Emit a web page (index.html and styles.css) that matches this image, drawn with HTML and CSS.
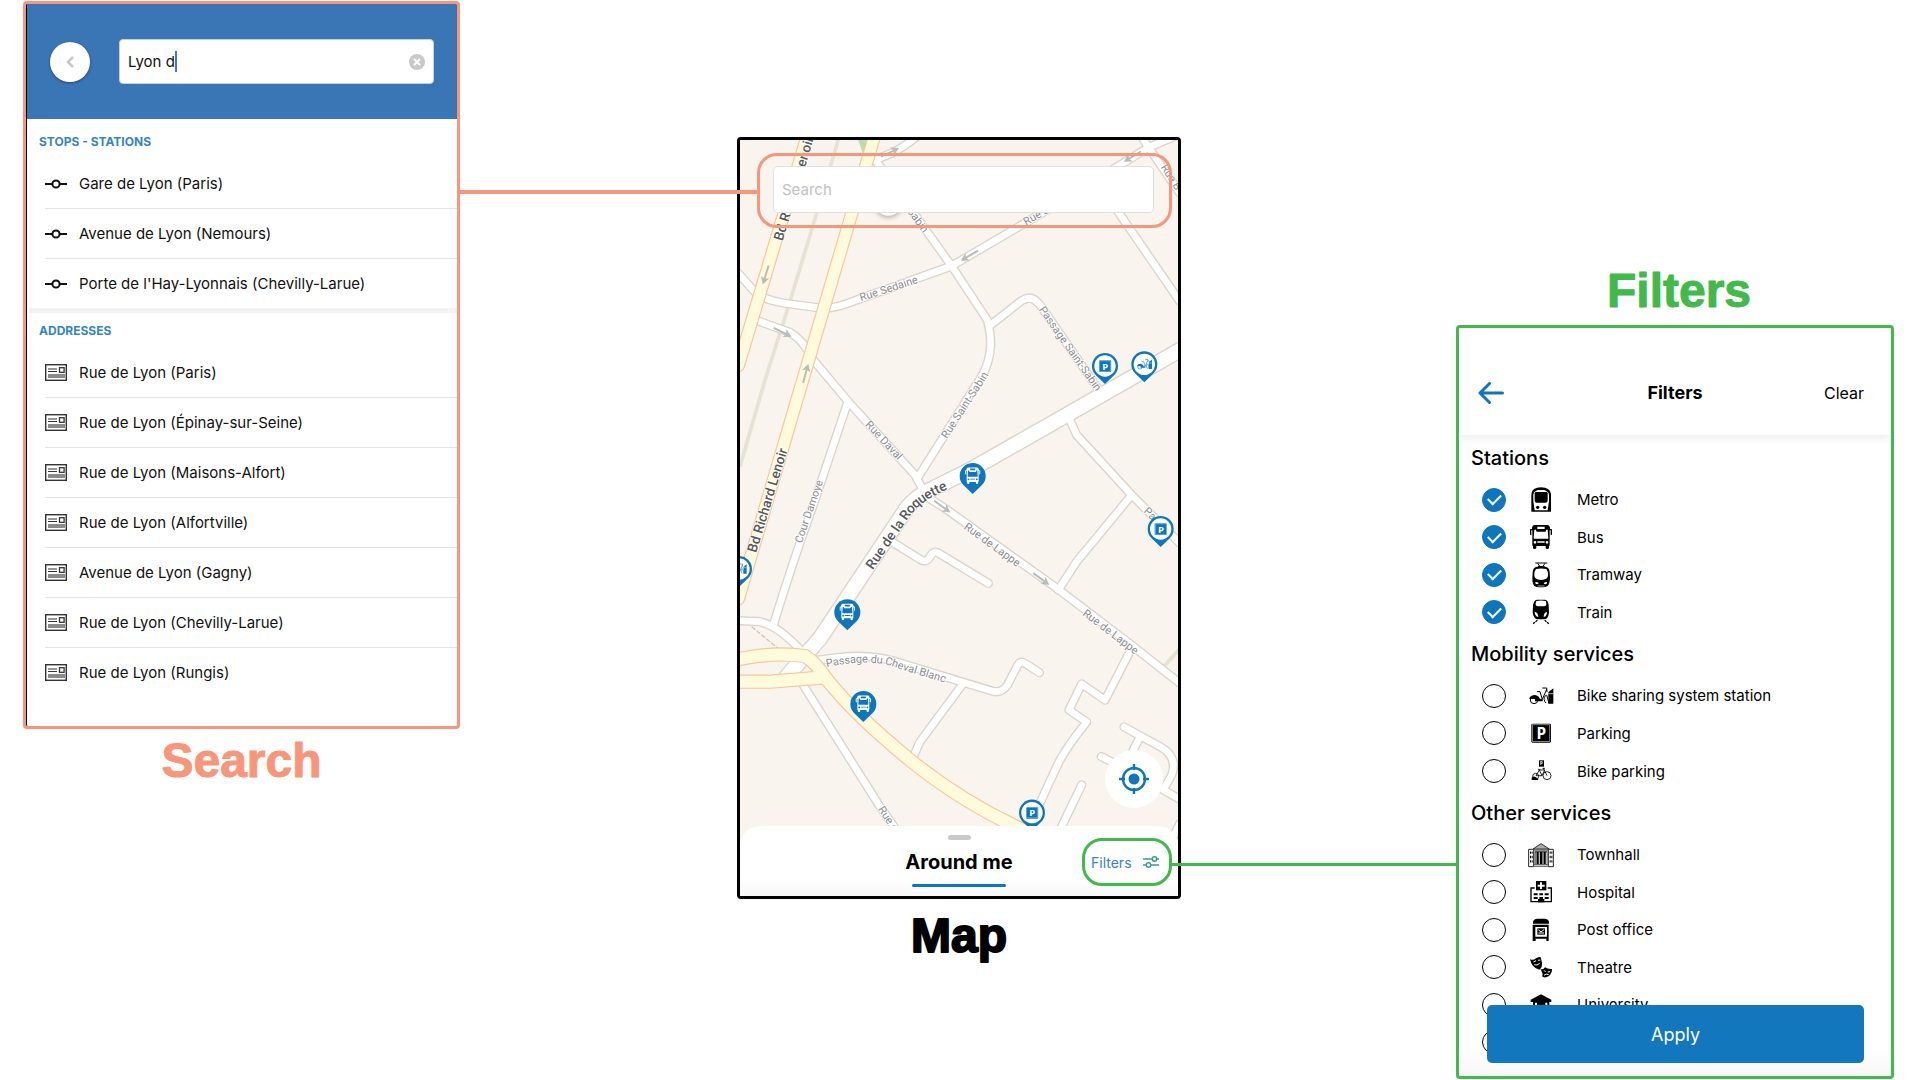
FILE: index.html
```html
<!DOCTYPE html>
<html lang="en">
<head>
<meta charset="utf-8">
<title>Map, search and filters</title>
<link rel="stylesheet" href="styles.css">
</head>
<body>
<svg class="sprite" aria-hidden="true">
  <defs>
    <symbol id="i-stop" viewBox="0 0 22 10"><path d="M0 5h7M15 5h7" stroke="#111" stroke-width="2"/><circle cx="11" cy="5" r="3.6" fill="none" stroke="#111" stroke-width="2"/></symbol>
    <symbol id="i-address" viewBox="0 0 22 17"><rect x=".7" y=".7" width="20.6" height="15.6" fill="#fff" stroke="#333" stroke-width="1.4"/><path d="M3 5h9M3 7.500h9" stroke="#333" stroke-width="1.200"/><path d="M3 11h17M3 13h17" stroke="#666" stroke-width="1.500"/><rect x="14.500" y="3.700" width="4.600" height="4.600" fill="none" stroke="#333" stroke-width="1.300"/></symbol>
    <symbol id="i-metro" viewBox="-42 -42 84 84"><path fill-rule="evenodd" d="M-29 35V-18Q-27-38 0-38T30-18V35ZM-19 31H20L24 4V-16Q22-30 0-30T-23-16V4Z"/><path d="M-15-24H16Q19-24 20-20V2Q19 8 14 8H-13Q-18 8-19 2V-20Q-18-24-15-24Z"/><path d="M-13-27H14" stroke="#fff" stroke-width="3"/><circle cx="-10" cy="22" r="5"/><circle cx="11" cy="22" r="5"/></symbol>
    <symbol id="i-bus" viewBox="-42 -42 84 84"><path fill="currentColor" fill-rule="evenodd" d="M-20-36H20Q26-36 27-28V-24H31Q33-24 33-20V-8Q33-5 29-5V-20H26V26H24V32Q24 36 19 36T14 32V27H-14V32Q-14 36-19 36T-24 32V26H-26V-20H-29V-5Q-33-5-33-8V-20Q-33-24-31-24H-27V-28Q-26-36-20-36ZM-20-22-22 3Q-22 5-20 5H20Q22 5 22 3L20-22H15V-18Q14-16 12-16H-12Q-15-16-15-20V-22ZM-11-31V-24H11V-31ZM-18 12A4 4 0 1 0-18 20 4 4 0 0 0-18 12ZM18 12A4 4 0 1 0 18 20 4 4 0 0 0 18 12ZM-11 13V17H11V13Z"/></symbol>
    <symbol id="i-tram" viewBox="-42 -42 84 84"><path d="M-17-36H19M-10-35-3-25M12-35 5-25M-9-25H11" fill="none" stroke="#000" stroke-width="3"/><path fill-rule="evenodd" d="M-17-23Q0-29 18-23 25-20 26-8L27 10Q26 27 20 33 15 37 0 37T-20 33Q-26 27-26 10L-25-8Q-24-20-17-23ZM-15-18Q-20-12-20 0-21 14 0 15 22 14 21 0 21-12 16-18 0-21-15-18ZM-17 21Q-18 28-12 28-7 27-7 24-11 21-17 21ZM18 21Q19 28 13 28 8 27 8 24 12 21 18 21Z"/><path d="M-10 33H11" stroke="#fff" stroke-width="2"/></symbol>
    <symbol id="i-train" viewBox="-42 -42 84 84"><path fill-rule="evenodd" d="M-12-37H12Q22-35 23-20L24 3Q21 20 12 22H-12Q-21 20-25 3L-24-20Q-22-35-12-37ZM-14-33Q-20-18-10-17H10Q20-18 14-33 0-36-14-33ZM-19-1Q-19 12-8 15-8 2-19-1ZM18-1Q18 12 8 15 8 2 18-1Z"/><path d="M-11 25-25 36M11 25 25 36" stroke="#000" stroke-width="4" stroke-dasharray="7 2"/></symbol>
    <symbol id="i-bikeshare" viewBox="-42 -42 84 84"><g fill="none" stroke="currentColor" stroke-width="3"><circle cx="-21" cy="12" r="11"/><path d="M-14 10H4L17-20M17-3 24 22M4-24H17L18-12M-12-13H-3L4 10M14-2Q4 10 15 21"/></g><path fill="currentColor" d="M-36 8Q-31-3-18-3-7-2-3 10L5 12V16H-18V9ZM22-11 37-23V23H22Z"/><path d="M22-7H37" stroke="#fff" stroke-width="2"/></symbol>
    <symbol id="i-parking" viewBox="-42 -42 84 84"><rect x="-29" y="-28" width="59" height="57" rx="4" fill="currentColor"/><rect x="-25.500" y="-24.500" width="52" height="50" fill="none" stroke="#fff" stroke-width="1.500"/><text class="glyph-p" x="1" y="17">P</text></symbol>
    <symbol id="i-bikepark" viewBox="-42 -42 84 84"><rect x="-6" y="-32" width="15" height="19"/><text class="glyph-p-small" x="1" y="-18">P</text><g fill="none" stroke="#000" stroke-width="2.500"><circle cx="18" cy="14" r="12"/><circle cx="-16" cy="16" r="9"/><path d="M-15 14-5-3H11L3 14H-15M-5-3 3 14M7-8 18 14M4-8H12M-9-5H-2"/></g><path d="M-28 27V20Q-18 10-7 27Z"/></symbol>
    <symbol id="i-townhall" viewBox="-42 -42 84 84"><path d="M-24-18 0-34 25-18Z" fill="#aaa" stroke="#333" stroke-width="3"/><path d="M-20-15H22" stroke="#555" stroke-width="4"/><path d="M-37-17H-22V35H-37ZM22-17H37V35H22Z" fill="#fff" stroke="#222" stroke-width="3"/><path d="M-33-7H-25M-33 6H-25M-33 19H-25M26-7H34M26 6H34M26 19H34" stroke="#000" stroke-width="7" stroke-dasharray="3 2"/><path d="M-19-11H19V28H-19Z"/><path d="M-15-8V28M-5-8V28M6-8V28M16-8V28" stroke="#bbb" stroke-width="4"/><path d="M-22 29H22M-25 34H25" stroke="#555" stroke-width="3"/></symbol>
    <symbol id="i-hospital" viewBox="-42 -42 84 84"><path d="M-15-33H16V-5H-15Z"/><path d="M0-29V-9M-10-19H11" stroke="#fff" stroke-width="6"/><path d="M-19-12H-30V29H31V-12H20" fill="none" stroke="#000" stroke-width="4"/><path d="M-22 7H-10M-5 7H6M11 7H23M-22 18H-10M-5 18H6M11 18H23" stroke="#000" stroke-width="6"/><path d="M-9 21H10V31H-9Z"/></symbol>
    <symbol id="i-post" viewBox="-42 -42 84 84"><path fill-rule="evenodd" d="M-24-19V-25Q-21-34-11-34H11Q21-34 24-25V-19ZM-22-16H23V33H16V26H-16V33H-25V-16ZM-17-9V20H18V-9Z"/><path d="M-11-5H12V14H-11Z"/><path d="M-8-1 0 6 10-2M-8 9H9" fill="none" stroke="#fff" stroke-width="3"/></symbol>
    <symbol id="i-theatre" viewBox="-42 -42 84 84"><path d="M-33-24Q-24-18-15-26-8-30-2-30 0-28 3-12 4 3-5 8-28 3-33-24Z"/><path d="M-2 5Q6 10 12 1 20 7 33 6 34 16 24 27 11 35 3 28 8 22-2 5Z"/><path d="M-23-15-15-19M-9-20-2-21M-20-7Q-12-3-4-11M9 10 14 15M20 15 27 14M9 25Q16 18 23 23" fill="none" stroke="#fff" stroke-width="3"/></symbol>
    <symbol id="i-university" viewBox="-42 -42 84 84"><path d="M-31-16 0-32 31-16V-9H-31Z"/><path d="M-24-11V30H25V-11Z"/><path d="M-18-7H-12V30H-18ZM13-7H19V30H13ZM-10 30V5Q-10-3 0-3T11 5V30Z" fill="#fff"/><circle cy="6" r="10"/></symbol>
    <symbol id="pin-solid" viewBox="-42 -42 84 100"><path fill="#0f75bc" d="M-28 27A39 39 0 1 1 28 27L0 54Z"/></symbol>
    <symbol id="pin-ring" viewBox="-42 -42 84 100"><path fill="#0f75bc" d="M-28 27A39 39 0 1 1 28 27L0 54Z"/><circle r="32" fill="#fff"/></symbol>
    <symbol id="arrow" viewBox="-32 -14 64 28"><path d="M-30 0H16" stroke="#bbb" stroke-width="6"/><path d="M6-13 30 0 6 13 12 0Z" fill="#bbb"/></symbol>
    <g id="streets">
      <path d="M25 430 80 492Q110 512 180 522L280 535Q320 535 380 510L665 408 960 235 1256 52 1344 15"/>
      <path d="M440 95 665 408 772 570Q790 640 775 690 765 730 735 770L565 1040"/>
      <path d="M430 92 490 67Q530 45 560 20"/>
      <path d="M782 585 875 512Q905 492 930 525L1110 785"/>
      <path d="M1140 210 1350 515M1232 15 1256 52 1350 190"/>
      <path d="M90 575 180 607Q220 630 250 690L355 815 555 1035 590 1100 645 1135 985 1378 1200 1542 1350 1660"/>
      <path d="M352 820 255 1110Q190 1290 130 1485"/>
      <path d="M485 1235 570 1288Q588 1300 600 1280 612 1258 630 1272L775 1360"/>
      <path d="M25 1472 90 1475Q150 1490 220 1570"/>
      <path d="M1015 860 1040 915 1205 1095 1350 1240M1205 1095 1040 1295 985 1380"/>
      <path d="M250 1592 330 1582Q430 1570 520 1602L700 1657 790 1684Q815 1690 832 1665L862 1608Q870 1590 885 1600L928 1628"/>
      <path d="M700 1660 570 1835 548 1885M210 1650 450 2030 520 2130"/>
      <path d="M1205 1555 1125 1710 1055 1662 1017 1740 1070 1776Q1010 1850 985 1900L920 2040"/>
      <path d="M1055 1965 985 2110M1182 1791 1290 1850Q1345 1880 1325 1935L1300 1980 1350 2008M1230 1820 1200 1880M1114 1880 1150 1898M1350 2080 1325 2130"/>
    </g>
    <path id="roquette" d="M1350 660 1010 855 720 1020 610 1075Q545 1105 520 1150L380 1360 270 1525 170 1640"/>
    <g id="boulevards"><path d="M231 20 25 707M433 20 25 1407"/></g>
    <g id="avenues"><path d="M25 1588Q130 1565 225 1578 260 1600 290 1648 380 1760 540 1890 700 2020 900 2110M25 1655H120L285 1642"/></g>
    <path id="t-roquette" d="M416 1312 520 1160Q550 1115 600 1087L700 1037"/>
    <path id="t-blanc" d="M288 1600Q430 1568 520 1608L700 1662"/>
  </defs>
</svg>

<main class="board">
  <section class="search-col">
    <div class="panel search-panel">
      <header class="search-head">
        <button class="round-back" aria-label="Back"><svg viewBox="0 0 10 14"><path d="M8 2 3 7l5 5" fill="none" stroke="#c8c8cc" stroke-width="2.500"/></svg></button>
        <div class="query">
          <input class="query-input" type="text" value="Lyon d" aria-label="Search places"><span class="caret"></span>
          <button class="query-clear" aria-label="Clear text"><svg viewBox="0 0 16 16"><circle cx="8" cy="8" r="8" fill="#c9c9c9"/><path d="m5 5 6 6M11 5l-6 6" stroke="#fff" stroke-width="2"/></svg></button>
        </div>
      </header>
      <section class="results stops">
        <h3>STOPS - STATIONS</h3>
        <ul>
          <li><svg class="stop"><use href="#i-stop"/></svg>Gare de Lyon (Paris)</li>
          <li><svg class="stop"><use href="#i-stop"/></svg>Avenue de Lyon (Nemours)</li>
          <li><svg class="stop"><use href="#i-stop"/></svg>Porte de l'Hay-Lyonnais (Chevilly-Larue)</li>
        </ul>
      </section>
      <section class="results">
        <h3>ADDRESSES</h3>
        <ul>
          <li><svg class="address"><use href="#i-address"/></svg>Rue de Lyon (Paris)</li>
          <li><svg class="address"><use href="#i-address"/></svg>Rue de Lyon (Épinay-sur-Seine)</li>
          <li><svg class="address"><use href="#i-address"/></svg>Rue de Lyon (Maisons-Alfort)</li>
          <li><svg class="address"><use href="#i-address"/></svg>Rue de Lyon (Alfortville)</li>
          <li><svg class="address"><use href="#i-address"/></svg>Avenue de Lyon (Gagny)</li>
          <li><svg class="address"><use href="#i-address"/></svg>Rue de Lyon (Chevilly-Larue)</li>
          <li><svg class="address"><use href="#i-address"/></svg>Rue de Lyon (Rungis)</li>
        </ul>
      </section>
    </div>
    <h2 class="caption caption-search"><svg viewBox="0 0 200 60"><text x="100" y="44">Search</text></svg></h2>
  </section>

  <div class="link link-search"></div>

  <section class="map-col">
    <div class="panel map-panel">
      <svg class="map" viewBox="30 30 1314 2268" preserveAspectRatio="xMidYMin slice" role="img" aria-label="Street map">
        <rect width="1400" height="2400" fill="#f9f4ed"/>
        <path d="M383 25H420L402 80Z" fill="#b9dfa6"/>
        <path d="M326 25 260 250 175 530 105 750 30 1010M1350 1555 1300 1612" fill="none" stroke="#e5e2d6" stroke-width="11"/>
        <path d="M65 1490 150 1560" stroke="#c9c5bf" stroke-width="4" stroke-dasharray="14 5"/>
        <g class="road">
          <use href="#streets" class="street-edge"/><use href="#roquette" class="main-edge"/>
          <use href="#streets" class="street-fill"/><use href="#roquette" class="main-fill"/>
          <use href="#boulevards" class="blvd-edge"/><use href="#boulevards" class="blvd-fill"/>
          <use href="#avenues" class="avenue-edge"/><use href="#avenues" class="avenue-fill"/>
        </g>
        <g>
          <use href="#arrow" x="-32" y="-14" width="64" height="28" transform="translate(107 435) rotate(107)"/>
          <use href="#arrow" x="-32" y="-14" width="64" height="28" transform="translate(480 67) rotate(-25)"/>
          <use href="#arrow" x="-32" y="-14" width="64" height="28" transform="translate(1207 80) rotate(149)"/>
          <use href="#arrow" x="-32" y="-14" width="64" height="28" transform="translate(718 377) rotate(150)"/>
          <use href="#arrow" x="-32" y="-14" width="64" height="28" transform="translate(158 607) rotate(26)"/>
          <use href="#arrow" x="-32" y="-14" width="64" height="28" transform="translate(227 730) rotate(-75)"/>
          <use href="#arrow" x="-32" y="-14" width="64" height="28" transform="translate(637 1130) rotate(36)"/>
          <use href="#arrow" x="-32" y="-14" width="64" height="28" transform="translate(934 1347) rotate(36)"/>
        </g>
        <g class="names">
          <text transform="translate(390 504) rotate(-18)">Rue Sedaine</text>
          <text transform="translate(452 118) rotate(54)">Rue Saint-Sabin</text>
          <text transform="translate(883 278) rotate(-30)">Rue Sedaine</text>
          <text transform="translate(1300 106) rotate(57)">Rue B</text>
          <text transform="translate(934 533) rotate(55)">Passage Saint-Sabin</text>
          <text transform="translate(642 922) rotate(-57)">Rue Saint-Sabin</text>
          <text transform="translate(412 878) rotate(47)">Rue Daval</text>
          <text transform="translate(205 1238) rotate(-71)">Cour Damoye</text>
          <text transform="translate(706 1186) rotate(36)">Rue de Lappe</text>
          <text transform="translate(1062 1446) rotate(37)">Rue de Lappe</text>
          <text transform="translate(1246 1138) rotate(44)">Passa</text>
          <text transform="translate(452 2032) rotate(57)">Rue de</text>
          <text><textPath href="#t-blanc">Passage du Cheval Blanc</textPath></text>
        </g>
        <g class="names names-main">
          <text transform="translate(143 330) rotate(-73)">Bd Richard Lenoir</text>
          <text transform="translate(64 1265) rotate(-73)">Bd Richard Lenoir</text>
          <text><textPath href="#t-roquette">Rue de la Roquette</textPath></text>
        </g>
        <circle class="knob" cx="475" cy="214" r="43"/>
        <g class="pins">
          <g transform="translate(1125 708)"><use href="#pin-ring" x="-42" y="-42" width="84" height="100"/><use href="#i-parking" x="-26" y="-26" width="52" height="52"/></g>
          <g transform="translate(1243 703)"><use href="#pin-ring" x="-42" y="-42" width="84" height="100"/><use href="#i-bikeshare" x="-26" y="-26" width="52" height="52"/></g>
          <g transform="translate(1292 1197)"><use href="#pin-ring" x="-42" y="-42" width="84" height="100"/><use href="#i-parking" x="-26" y="-26" width="52" height="52"/></g>
          <g transform="translate(27 1317)"><use href="#pin-ring" x="-42" y="-42" width="84" height="100"/><use href="#i-bikeshare" x="-26" y="-26" width="52" height="52"/></g>
          <g transform="translate(906 2048)"><use href="#pin-ring" x="-42" y="-42" width="84" height="100"/><use href="#i-parking" x="-26" y="-26" width="52" height="52"/></g>
          <g class="bus-pin" transform="translate(728 1038)"><use href="#pin-solid" x="-42" y="-42" width="84" height="100"/><use href="#i-bus" x="-29" y="-30" width="58" height="58"/></g>
          <g class="bus-pin" transform="translate(352 1447)"><use href="#pin-solid" x="-42" y="-42" width="84" height="100"/><use href="#i-bus" x="-29" y="-30" width="58" height="58"/></g>
          <g class="bus-pin" transform="translate(400 1722)"><use href="#pin-solid" x="-42" y="-42" width="84" height="100"/><use href="#i-bus" x="-29" y="-30" width="58" height="58"/></g>
        </g>
      </svg>
      <div class="map-search-ring"><input class="map-search" type="text" placeholder="Search" aria-label="Search the map"></div>
      <button class="locate" aria-label="Locate me"><svg viewBox="0 0 30 30"><g fill="none" stroke="#0f75bc" stroke-width="2.400"><circle cx="15" cy="15" r="11"/><path d="M15 0v6M15 24v6M0 15h6M24 15h6"/></g><circle cx="15" cy="15" r="5.500" fill="#0f75bc"/></svg></button>
      <div class="sheet">
        <span class="handle"></span>
        <h1>Around me</h1>
        <span class="underline"></span>
        <button class="filter-open">Filters <svg viewBox="0 0 16 12"><g fill="none" stroke="#3f9a8c" stroke-width="1.500"><path d="M0 3h9M14 3h2M0 9h3M8 9h8"/><circle cx="11.500" cy="3" r="2.200"/><circle cx="5.500" cy="9" r="2.200"/></g></svg></button>
      </div>
    </div>
    <h2 class="caption caption-map"><svg viewBox="0 0 200 60"><text x="100" y="43">Map</text></svg></h2>
  </section>

  <div class="link link-filters"></div>

  <section class="filters-col">
    <h2 class="caption caption-filters"><svg viewBox="0 0 200 60"><text x="100" y="44">Filters</text></svg></h2>
    <form class="panel filters-panel">
      <header class="filters-head">
        <button type="button" class="plain-back" aria-label="Back"><svg viewBox="0 0 26 22"><path d="M24.500 11H2M11.500 1.500 2 11l9.500 9.500" fill="none" stroke="#0f75bc" stroke-width="3" stroke-linecap="round" stroke-linejoin="round"/></svg></button>
        <h3>Filters</h3>
        <button type="reset" class="clear">Clear</button>
      </header>
      <h4>Stations</h4>
      <ul class="options four">
        <li><label><input type="checkbox" checked><svg><use href="#i-metro"/></svg>Metro</label></li>
        <li><label><input type="checkbox" checked><svg><use href="#i-bus"/></svg>Bus</label></li>
        <li><label><input type="checkbox" checked><svg><use href="#i-tram"/></svg>Tramway</label></li>
        <li><label><input type="checkbox" checked><svg><use href="#i-train"/></svg>Train</label></li>
      </ul>
      <h4>Mobility services</h4>
      <ul class="options three">
        <li><label><input type="checkbox"><svg><use href="#i-bikeshare"/></svg>Bike sharing system station</label></li>
        <li><label><input type="checkbox"><svg><use href="#i-parking"/></svg>Parking</label></li>
        <li><label><input type="checkbox"><svg><use href="#i-bikepark"/></svg>Bike parking</label></li>
      </ul>
      <h4>Other services</h4>
      <ul class="options six">
        <li><label><input type="checkbox"><svg><use href="#i-townhall"/></svg>Townhall</label></li>
        <li><label><input type="checkbox"><svg><use href="#i-hospital"/></svg>Hospital</label></li>
        <li><label><input type="checkbox"><svg><use href="#i-post"/></svg>Post office</label></li>
        <li><label><input type="checkbox"><svg><use href="#i-theatre"/></svg>Theatre</label></li>
        <li><label><input type="checkbox"><svg><use href="#i-university"/></svg>University</label></li>
        <li><label><input type="checkbox" aria-label="Other"></label></li>
      </ul>
      <button type="button" class="apply">Apply</button>
    </form>
  </section>
</main>
</body>
</html>
```
FILE: styles.css
```css
* { box-sizing: border-box; }
body { margin: 0; background: #fff; color: #111; font-family: Inter, "Liberation Sans", sans-serif; }
h1, h2, h3, h4, ul { margin: 0; padding: 0; }
ul { list-style: none; }
button, input { font: inherit; margin: 0; padding: 0; border: 0; background: none; color: inherit; }
svg { display: block; flex: none; }
.sprite { position: absolute; width: 0; height: 0; }

.board {
  display: grid;
  grid-template-columns: 437fr 277fr 444fr 275fr 438fr;
  align-items: start;
  padding: 0 26px 0 23px;
}
.panel { position: relative; overflow: hidden; border: 3px solid; border-radius: 4px; background: #fff; }

.caption svg { width: 100%; height: 60px; overflow: visible; }
.caption text {
  font-family: "Liberation Sans", Arial, sans-serif; font-weight: 700; font-size: 48px; text-anchor: middle;
  fill: currentColor; stroke: currentColor; stroke-width: 1px; stroke-linejoin: round;
}
.caption-search { color: #f7967a; padding-top: 4px; }
.caption-map { color: #000; padding-top: 10px; }
.caption-map text { stroke-width: 2px; }
.caption-filters { color: #41b94b; padding-left: 8px; }

.link { position: relative; z-index: 2; }
.link-search { height: 4px; margin: 190px -20px 0 0; background: #f7967a; }
.link-filters { height: 3px; margin: 863px 0 0 -9px; background: #41b94b; }

/* search */
.search-col { padding-top: 1px; }
.search-panel { border-color: #f7967a; padding-bottom: 29px; box-shadow: inset 1px 0 #000; }
.search-head { display: flex; align-items: center; gap: 29px; height: 115px; margin-left: 1px; padding: 0 23px 0 23px; background: #3a76b6; }
.round-back { display: grid; place-items: center; width: 40px; height: 40px; border-radius: 50%; background: #fff; box-shadow: 0 1px 3px #0006; }
.round-back svg { width: 10px; height: 14px; }
.query { display: flex; align-items: center; flex: 1; height: 45px; padding: 0 8px; border: 1px solid #c6d0d8; border-radius: 4px; background: #fff; }
.query-input { field-sizing: content; width: auto; font-size: 15px; outline: 0; }
.caret { width: 2px; height: 21px; background: #4a6fe8; }
.query-clear { margin-left: auto; }
.query-clear svg { width: 16px; height: 16px; }
.results { margin-left: 3px; padding-left: 10px; }
.results h3 { font-size: 12px; font-weight: 700; line-height: 35px; color: #3585c3; }
.results ul { padding-left: 6px; }
.results li { display: flex; align-items: center; gap: 12px; height: 50px; border-bottom: 1px solid #e3e3e3; font-size: 15px; }
.results li:last-child { height: 49px; border-bottom: 0; }
.stops { padding-top: 5px; border-bottom: 5px solid #f2f2f2; }
.stop { width: 22px; height: 10px; }
.address { width: 22px; height: 17px; }

/* map */
.map-col { padding-top: 137px; }
.map-panel { border-color: #000; }
.map { width: 100%; height: auto; }
.road { fill: none; stroke-linecap: round; stroke-linejoin: round; }
.street-edge { stroke: #dbd4cb; stroke-width: 28px; }
.street-fill { stroke: #fff; stroke-width: 20px; }
.main-edge { stroke: #dbd4cb; stroke-width: 50px; }
.main-fill { stroke: #fff; stroke-width: 42px; }
.blvd-edge { stroke: #f7c69b; stroke-width: 40px; }
.blvd-fill { stroke: #fdfbdc; stroke-width: 33px; }
.avenue-edge { stroke: #f7c69b; stroke-width: 43px; }
.avenue-fill { stroke: #fdfbdc; stroke-width: 36px; }
.names { font-family: Roboto, sans-serif; font-size: 33px; fill: #8c8c92; stroke: #fff; stroke-width: 5px; paint-order: stroke; stroke-linejoin: round; dominant-baseline: central; }
.names-main { font-size: 41px; font-weight: 500; fill: #58585c; }
.knob { fill: #fff; filter: drop-shadow(0 4px 8px #0005); }
.pins { color: #0f75bc; }
.bus-pin { color: #fff; }
.glyph-p { font: 700 46px "Open Sans", sans-serif; fill: #fff; text-anchor: middle; }
.glyph-p-small { font: 700 13px "Open Sans", sans-serif; fill: #fff; text-anchor: middle; }
.map-search-ring { position: absolute; top: 13px; left: 17px; right: 6px; padding: 10px 15px 12px 13px; border: 3px solid #f7967a; border-radius: 20px; }
.map-search { display: block; width: 100%; height: 47px; padding: 0 8px; border: 1px solid #e2e0de; border-radius: 5px; background: #fff; font-size: 15px; }
.map-search::placeholder { color: #c2c2c2; opacity: 1; }
.locate { position: absolute; right: 15px; bottom: 88px; display: grid; place-items: center; width: 58px; height: 58px; border-radius: 50%; background: #fff; }
.locate svg { width: 30px; height: 30px; }
.sheet { position: absolute; left: 0; right: 0; bottom: 0; display: flex; flex-direction: column; align-items: center; height: 70px; padding-top: 9px; border-radius: 20px 20px 0 0; background: linear-gradient(#fff 75%, #f7f7f7); color: #000; }
.handle { width: 23px; height: 5px; border-radius: 3px; background: #c9c9c9; }
.sheet h1 { padding: 8px 0 7px; font-size: 20px; font-weight: 700; line-height: 29px; }
.underline { width: 94px; height: 3px; border-radius: 2px; background: #0f75bc; }
.filter-open { position: absolute; top: 12px; right: 6px; display: flex; align-items: center; justify-content: space-between; width: 90px; height: 48px; padding: 0 10px 0 6px; border: 3px solid #41b94b; border-radius: 20px; color: #3585c3; font-size: 14px; }
.filter-open svg { width: 16px; height: 12px; }

/* filters */
.filters-col { padding-top: 263px; }
.filters-panel { margin-top: 2px; padding-bottom: 15px; border-color: #41b94b; background: linear-gradient(#fff 96%, #f7f7f7); color: #000; }
.filters-head { display: grid; grid-template-columns: 1fr auto 1fr; align-items: center; height: 107px; padding: 22px 19px 0; box-shadow: 0 3px 8px #00000014; }
.filters-head h3 { font-size: 18px; font-weight: 700; }
.plain-back svg { width: 26px; height: 22px; }
.plain-back { justify-self: start; }
.clear { justify-self: end; margin-right: 8px; font-size: 16px; }
.filters-panel h4 { padding-left: 12px; font-size: 20px; font-weight: 500; line-height: 46px; }
.options { display: grid; grid-auto-rows: 1fr; padding-left: 23px; font-size: 15px; }
.four { min-height: 150px; }
.three { min-height: 113px; }
.six { min-height: 225px; }
.options li { display: grid; align-items: center; }
.options label { display: flex; align-items: center; }
.options svg { width: 28px; height: 28px; margin: 0 22px 0 21px; }
.options input { display: grid; place-items: center; width: 24px; height: 24px; appearance: none; border: 1px solid #000; border-radius: 50%; }
.options input:checked { border-color: #0f75bc; background: #0f75bc; }
.options input:checked::before { content: ""; width: 11px; height: 6px; margin-bottom: 3px; border: solid #fff; border-width: 0 0 2px 2px; transform: rotate(-45deg); }
.apply { position: absolute; left: 28px; right: 27px; bottom: 13px; height: 58px; border-radius: 5px; background: #1277bc; color: #fff; font-size: 18px; }
```
